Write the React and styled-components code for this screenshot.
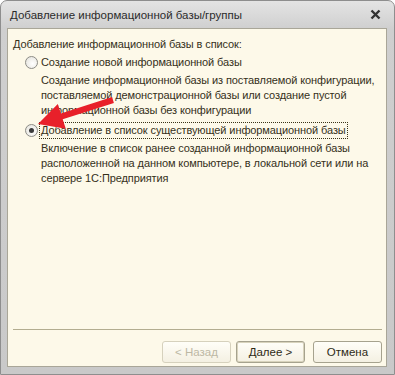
import styled, { createGlobalStyle } from 'styled-components';

const Global = createGlobalStyle`
  body {
    margin: 0;
    background: #ffffff;
    font-family: "Liberation Sans", Arial, sans-serif;
  }
`

const Window = styled.div`
  width: 395px;
  height: 375px;
  box-sizing: border-box;
  display: flex;
  flex-direction: column;
  padding: 0 7px 7px 6px;
  border-radius: 7px 7px 0 0;
  border: 1px solid #8e8e8e;
  background: linear-gradient(#e4e4e4, #cfcfcf 28px, #c9c9c9);
  overflow: hidden;
`

const TitleBar = styled.div`
  height: 27px;
  flex: none;
  display: flex;
  align-items: center;
  justify-content: space-between;
  padding: 0 6px 0 3px;
  font-size: 11.5px;
  color: #2b2b2b;
`

const Close = styled.svg`
  width: 11px;
  height: 11px;
`

const Body = styled.div`
  flex: 1;
  position: relative;
  display: flex;
  flex-direction: column;
  background: #fdf9e9;
  border: 1px solid #a9a698;
  padding: 8px 4px 0 5px;
  font-size: 11px;
  letter-spacing: -0.1px;
  white-space: nowrap;
  color: #35301a;
`

const Heading = styled.div`
  line-height: 15px;
`

const Option = styled.div`
  display: flex;
  align-items: center;
  margin: ${p => p.$first ? '2px' : '4px'} 0 0 12px;
  height: 17px;
`

const Radio = styled.span`
  width: 13px;
  height: 13px;
  flex: none;
  box-sizing: border-box;
  border-radius: 50%;
  border: 1px solid #8c8c86;
  background: radial-gradient(circle at 60% 60%, #ffffff, #e2e0d8);
  display: flex;
  align-items: center;
  justify-content: center;
  margin-right: 1px;
  &::after {
    content: '';
    display: ${p => p.$checked ? 'block' : 'none'};
    width: 5px;
    height: 5px;
    border-radius: 50%;
    background: #3a3a3a;
  }
`

const Label = styled.span`
  padding: 1px 1px;
  border: 1px dotted ${p => p.$focus ? '#3a3418' : 'transparent'};
  line-height: 13px;
`

const Description = styled.div`
  margin: 2px 0 0 28px;
  line-height: 15px;
`

const Spacer = styled.div`
  flex: 1;
`

const Separator = styled.div`
  height: 1px;
  background: #b3ad90;
`

const Buttons = styled.div`
  display: flex;
  justify-content: flex-end;
  padding: 11px 0 3px;
`

const Button = styled.button`
  width: 69px;
  height: 22px;
  margin-left: ${p => p.$gap || 0}px;
  border-radius: 3px;
  border: 1px solid ${p => p.$disabled ? '#d6d1bd' : '#a6a28e'};
  background: linear-gradient(#fffef8, #f4f0e2);
  font-family: inherit;
  font-size: 11.5px;
  color: ${p => p.$disabled ? '#bdb8a4' : '#2e2a16'};
  padding: 0;
  box-shadow: ${p => p.$default ? 'inset 0 0 0 1px #d8d3bc' : 'none'};
`

const Arrow = styled.svg`
  position: absolute;
  left: 0;
  top: 0;
  width: 130px;
  height: 130px;
  pointer-events: none;
`

export default function App() {
  return (
    <>
      <Global />
      <Window>
        <TitleBar>
          <span>Добавление информационной базы/группы</span>
          <Close viewBox="0 0 11 11">
            <path d="M1.5 1.5 L9.5 9.5 M9.5 1.5 L1.5 9.5" stroke="#333" strokeWidth="2.4" />
          </Close>
        </TitleBar>
        <Body>
          <Heading>Добавление информационной базы в список:</Heading>
          <Option $first>
            <Radio />
            <Label>Создание новой информационной базы</Label>
          </Option>
          <Description>
            Создание информационной базы из поставляемой конфигурации,<br />
            поставляемой демонстрационной базы или создание пустой<br />
            информационной базы без конфигурации
          </Description>
          <Option>
            <Radio $checked />
            <Label $focus>Добавление в список существующей информационной базы</Label>
          </Option>
          <Description>
            Включение в список ранее созданной информационной базы<br />
            расположенной на данном компьютере,  в локальной сети или на<br />
            сервере 1С:Предприятия
          </Description>
          <Spacer />
          <Separator />
          <Buttons>
            <Button $disabled>&lt; Назад</Button>
            <Button $default $gap={5}>Далее &gt;</Button>
            <Button $gap={8}>Отмена</Button>
          </Buttons>
          <Arrow viewBox="0 0 130 130">
            <path d="M30 95 L49.8 75 L52.9 84.5 L104.1 68.1 L105.9 73.9 L54.7 90.3 L57.8 99.8 Z" fill="#e8202a" />
          </Arrow>
        </Body>
      </Window>
    </>
  );
}
